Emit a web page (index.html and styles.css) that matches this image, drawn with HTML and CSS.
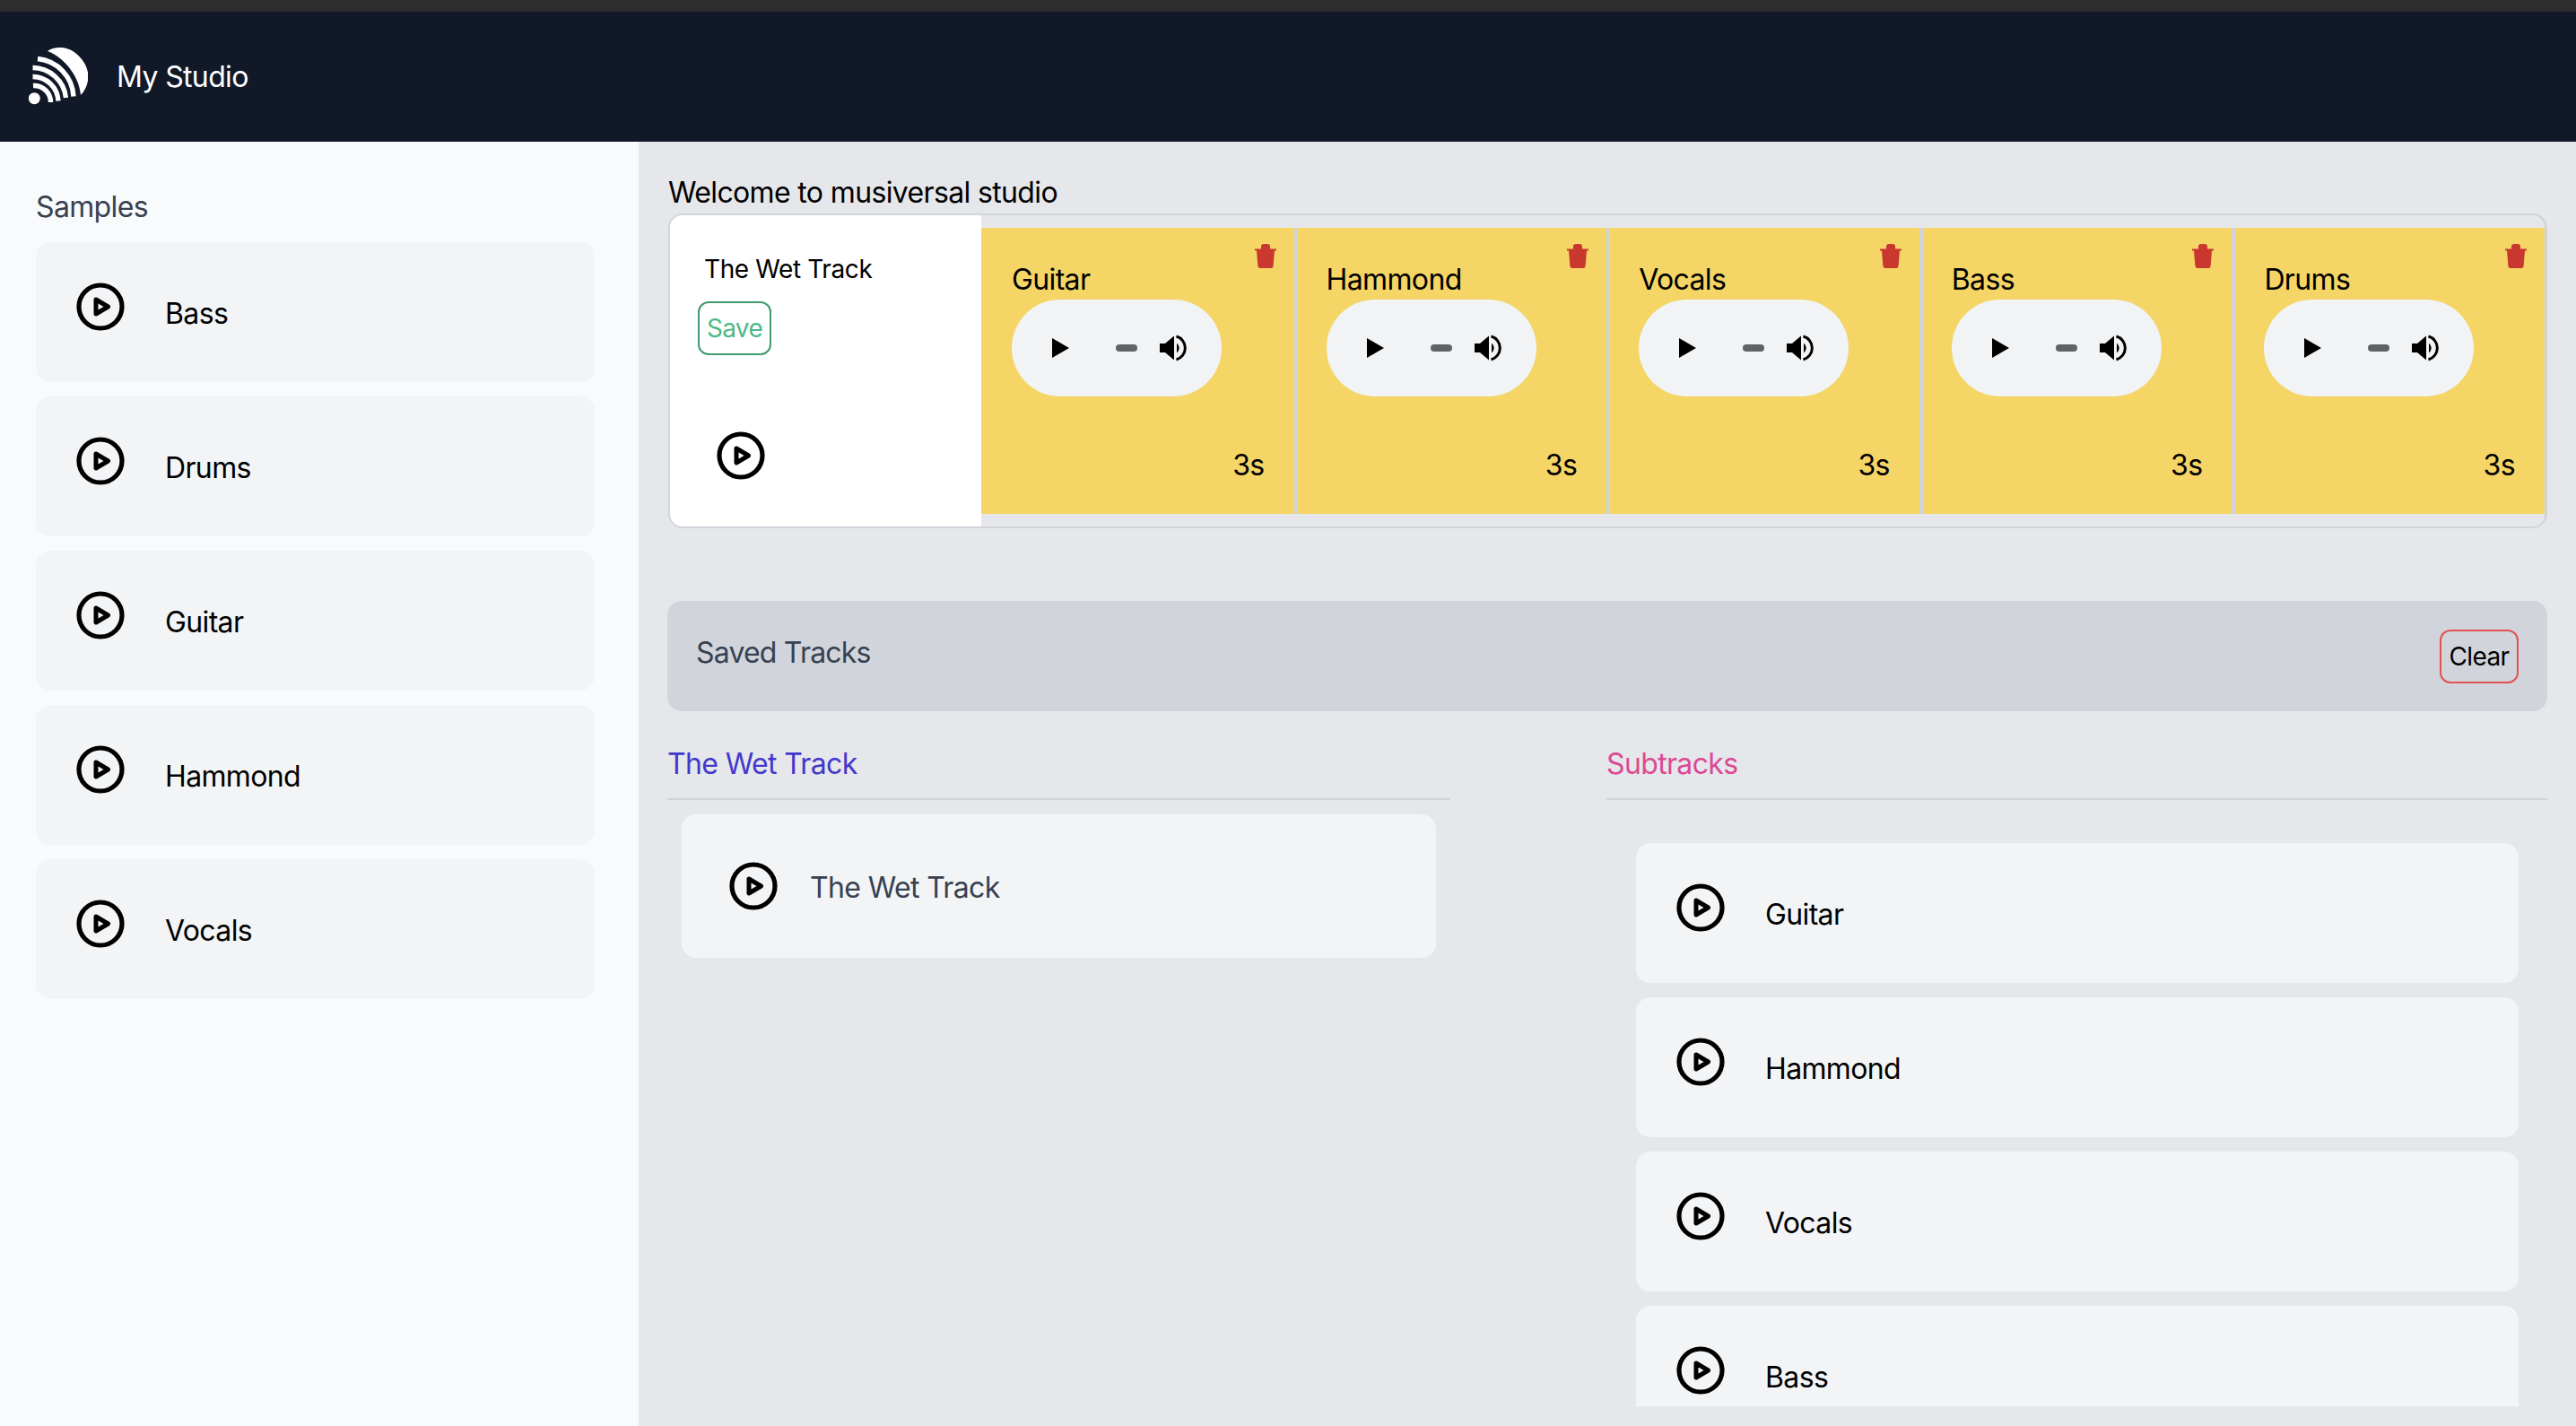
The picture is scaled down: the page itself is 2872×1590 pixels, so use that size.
FILE: index.html
```html
<!DOCTYPE html>
<html lang="en">
<head>
    <meta charset="UTF-8">
    <meta name="viewport" content="width=device-width, initial-scale=1.0">
    <title>My Studio</title>
    <link rel="stylesheet" href="styles.css">
</head>
<body>
    <svg class="icon-defs" xmlns="http://www.w3.org/2000/svg">
        <symbol id="play-circle" viewBox="0 0 54 54">
            <circle cx="27" cy="27" r="24" fill="none" stroke="currentColor" stroke-width="5.2"/>
            <path d="M22 19L35.5 27L22 35Z" fill="none" stroke="currentColor" stroke-width="5" stroke-linejoin="round"/>
        </symbol>
        <symbol id="trash" viewBox="0 0 24 27">
            <path d="M7 5.6V3Q7 0 10 0H14Q17 0 17 3V5.6H24V7.6H22L20.6 24.5Q20.4 27 18 27H6Q3.6 27 3.4 24.5L2 7.6H0V5.6Z" fill="currentColor"/>
        </symbol>
        <symbol id="volume" viewBox="0 0 31 30">
            <path d="M0 10H6L16 1.5V28.5L6 20H0Z" fill="currentColor"/>
            <path d="M19 9.5Q24.5 15 19 20.5Z" fill="currentColor"/>
            <path d="M18.5 2A13.5 13.5 0 0 1 18.5 28" fill="none" stroke="currentColor" stroke-width="3"/>
        </symbol>
    </svg>

    <div class="window-strip"></div>

    <nav class="navbar">
        <svg class="logo" viewBox="0 0 66 65" xmlns="http://www.w3.org/2000/svg">
            <circle cx="6.3" cy="57.7" r="6.5" fill="#fff"/>
            <g fill="none" stroke="#fff" stroke-width="5.4">
                <path d="M5 43.5A18.5 18.5 0 0 1 24.5 62"/>
                <path d="M4.5 33.5A28.5 28.5 0 0 1 33 60.5"/>
                <path d="M4.5 23.5A37.5 37.5 0 0 1 41.5 57"/>
                <path d="M10 13.5A44.5 44.5 0 0 1 50 55.5"/>
            </g>
            <path d="M21 5C28 0 42 -1 52 7C62 15 68 26 66 38C65 44 62 50 58 54C57 38 44 14 21 5Z" fill="#fff"/>
        </svg>
        <span class="brand">My Studio</span>
    </nav>

    <div class="layout">
        <aside class="sidebar">
            <h2 class="sidebar-title">Samples</h2>
            <div class="card"><svg class="play-icon"><use href="#play-circle"/></svg><span class="card-label">Bass</span></div>
            <div class="card"><svg class="play-icon"><use href="#play-circle"/></svg><span class="card-label">Drums</span></div>
            <div class="card"><svg class="play-icon"><use href="#play-circle"/></svg><span class="card-label">Guitar</span></div>
            <div class="card"><svg class="play-icon"><use href="#play-circle"/></svg><span class="card-label">Hammond</span></div>
            <div class="card"><svg class="play-icon"><use href="#play-circle"/></svg><span class="card-label">Vocals</span></div>
        </aside>

        <main class="studio">
            <p class="welcome">Welcome to musiversal studio</p>

            <section class="track-box">
                <div class="track-info">
                    <div class="track-name">The Wet Track</div>
                    <button class="save-btn" type="button">Save</button>
                    <svg class="play-icon track-play"><use href="#play-circle"/></svg>
                </div>
                <div class="cells">
                    <div class="cell">
                        <svg class="trash"><use href="#trash"/></svg>
                        <div class="cell-name">Guitar</div>
                        <div class="player"><span class="player-play"></span><span class="player-dash"></span><svg class="player-volume"><use href="#volume"/></svg></div>
                        <div class="cell-time">3s</div>
                    </div>
                    <div class="cell">
                        <svg class="trash"><use href="#trash"/></svg>
                        <div class="cell-name">Hammond</div>
                        <div class="player"><span class="player-play"></span><span class="player-dash"></span><svg class="player-volume"><use href="#volume"/></svg></div>
                        <div class="cell-time">3s</div>
                    </div>
                    <div class="cell">
                        <svg class="trash"><use href="#trash"/></svg>
                        <div class="cell-name">Vocals</div>
                        <div class="player"><span class="player-play"></span><span class="player-dash"></span><svg class="player-volume"><use href="#volume"/></svg></div>
                        <div class="cell-time">3s</div>
                    </div>
                    <div class="cell">
                        <svg class="trash"><use href="#trash"/></svg>
                        <div class="cell-name">Bass</div>
                        <div class="player"><span class="player-play"></span><span class="player-dash"></span><svg class="player-volume"><use href="#volume"/></svg></div>
                        <div class="cell-time">3s</div>
                    </div>
                    <div class="cell">
                        <svg class="trash"><use href="#trash"/></svg>
                        <div class="cell-name">Drums</div>
                        <div class="player"><span class="player-play"></span><span class="player-dash"></span><svg class="player-volume"><use href="#volume"/></svg></div>
                        <div class="cell-time">3s</div>
                    </div>
                </div>
            </section>

            <section class="saved-bar">
                <span class="saved-title">Saved Tracks</span>
                <button class="clear-btn" type="button">Clear</button>
            </section>

            <section class="columns">
                <div>
                    <h3 class="column-title title-indigo">The Wet Track</h3>
                    <div class="card wet-card"><svg class="play-icon"><use href="#play-circle"/></svg><span class="card-label wet-label">The Wet Track</span></div>
                </div>
                <div>
                    <h3 class="column-title title-pink">Subtracks</h3>
                    <div class="subtrack-list">
                        <div class="card"><svg class="play-icon"><use href="#play-circle"/></svg><span class="card-label">Guitar</span></div>
                        <div class="card"><svg class="play-icon"><use href="#play-circle"/></svg><span class="card-label">Hammond</span></div>
                        <div class="card"><svg class="play-icon"><use href="#play-circle"/></svg><span class="card-label">Vocals</span></div>
                        <div class="card"><svg class="play-icon"><use href="#play-circle"/></svg><span class="card-label">Bass</span></div>
                    </div>
                </div>
            </section>
        </main>
    </div>
</body>
</html>
```

FILE: styles.css
```css
* {
    box-sizing: border-box;
}

body {
    font-family: Inter, "Liberation Sans", sans-serif;
    font-size: 32px;
    line-height: 48px;
    letter-spacing: -0.02em;
    margin: 0;
    height: 100vh;
    overflow: hidden;
    display: flex;
    flex-direction: column;
    color: #000;
    background-color: #e5e7eb;
}

.icon-defs {
    display: none;
}

.window-strip {
    height: 13px;
    background-color: #2d2d2d;
}

.navbar {
    height: 145px;
    flex-shrink: 0;
    display: flex;
    align-items: center;
    padding-left: 32px;
    background-color: #111827;
}

.logo {
    width: 66px;
    height: 65px;
    margin-top: -2px;
}

.brand {
    margin-left: 32px;
    margin-top: 1px;
    color: #fff;
}

.layout {
    flex: 1;
    display: flex;
    min-height: 0;
}

.sidebar {
    width: 712px;
    flex-shrink: 0;
    padding: 49px 49px 0 40px;
    background-color: #f9fafb;
}

.sidebar-title {
    font-size: 32px;
    font-weight: 400;
    margin: 0 0 15px;
    color: #374151;
}

.card {
    height: 156px;
    margin-bottom: 16px;
    padding: 45px;
    display: flex;
    align-items: flex-start;
    border-radius: 16px;
    background-color: #f3f4f6;
}

.play-icon {
    width: 54px;
    height: 54px;
    flex-shrink: 0;
    color: #000;
}

.card-label {
    margin-left: 45px;
    margin-top: 11px;
}

.studio {
    flex: 1;
    min-width: 0;
    padding: 31px 32px 0;
}

.welcome {
    margin: 2px 0 -1px 1px;
}

.track-box {
    height: 351px;
    margin-left: 1px;
    display: flex;
    border-style: solid;
    border-color: #d1d5db;
    border-width: 2px 3px 2px 2px;
    border-radius: 16px;
    overflow: hidden;
}

.track-info {
    width: 347px;
    flex-shrink: 0;
    padding: 40px 0 0 31px;
    background-color: #fff;
}

.track-name {
    font-size: 28px;
    line-height: 40px;
    letter-spacing: -0.014em;
    margin-left: 7px;
}

.save-btn {
    display: block;
    width: 82px;
    height: 60px;
    margin-top: 16px;
    padding: 0;
    font-family: inherit;
    font-size: 28px;
    letter-spacing: inherit;
    color: #4fb987;
    background-color: #fff;
    border: 2px solid #3f9a6e;
    border-radius: 12px;
}

.track-play {
    display: block;
    margin: 85px 0 0 21px;
}

.cells {
    flex: 1;
    min-width: 0;
    padding: 14px 0;
    display: grid;
    grid-template-columns: repeat(5, 1fr);
}

.cell {
    position: relative;
    min-width: 0;
    display: flex;
    flex-direction: column;
    align-items: flex-start;
    padding: 32px 33px 30px 34px;
    background-color: #f5d565;
}

.cell + .cell {
    border-left: 4px solid #d1d5db;
    padding-left: 32px;
}

.cell-name {
    margin: 2px 0 -2px;
}

.trash {
    position: absolute;
    top: 18px;
    right: 20px;
    width: 24px;
    height: 27px;
    color: #c9372e;
}

.player {
    width: 234px;
    height: 108px;
    display: flex;
    align-items: center;
    padding-left: 45px;
    border-radius: 54px;
    background-color: #f1f3f4;
}

.player-play {
    width: 0;
    height: 0;
    border-style: solid;
    border-width: 11.5px 0 11.5px 19px;
    border-color: transparent transparent transparent #000;
}

.player-dash {
    width: 24px;
    height: 8px;
    margin-left: 52px;
    border-radius: 4px;
    background-color: #5f6368;
}

.player-volume {
    width: 31px;
    height: 30px;
    margin-left: 25px;
    color: #000;
}

.cell-time {
    margin-top: auto;
    align-self: flex-end;
}

.saved-bar {
    height: 123px;
    margin-top: 81px;
    padding: 0 32px;
    display: flex;
    align-items: center;
    justify-content: space-between;
    border-radius: 16px;
    background-color: #d1d5db;
}

.saved-title {
    margin-top: -8px;
    letter-spacing: -0.025em;
    color: #374151;
}

.clear-btn {
    width: 88px;
    height: 60px;
    padding: 0;
    font-family: inherit;
    font-size: 28px;
    letter-spacing: inherit;
    color: #000;
    background-color: transparent;
    border: 2px solid #e05252;
    border-radius: 12px;
}

.columns {
    display: grid;
    grid-template-columns: 873px 1fr;
    column-gap: 174px;
    margin-top: 33px;
}

.column-title {
    font-size: 32px;
    font-weight: 400;
    margin: 0;
    padding: 2px 0 14px;
    border-bottom: 2px solid #d1d5db;
}

.title-indigo {
    color: #4338ca;
}

.title-pink {
    color: #db4a92;
}

.wet-card {
    height: 160px;
    margin: 16px 16px 0;
    padding: 53px;
}

.wet-label {
    margin-left: 36px;
    margin-top: 5px;
    color: #374151;
}

.subtrack-list {
    height: 628px;
    margin-top: 48px;
    padding: 0 32px 0 33px;
    overflow: hidden;
}
```
